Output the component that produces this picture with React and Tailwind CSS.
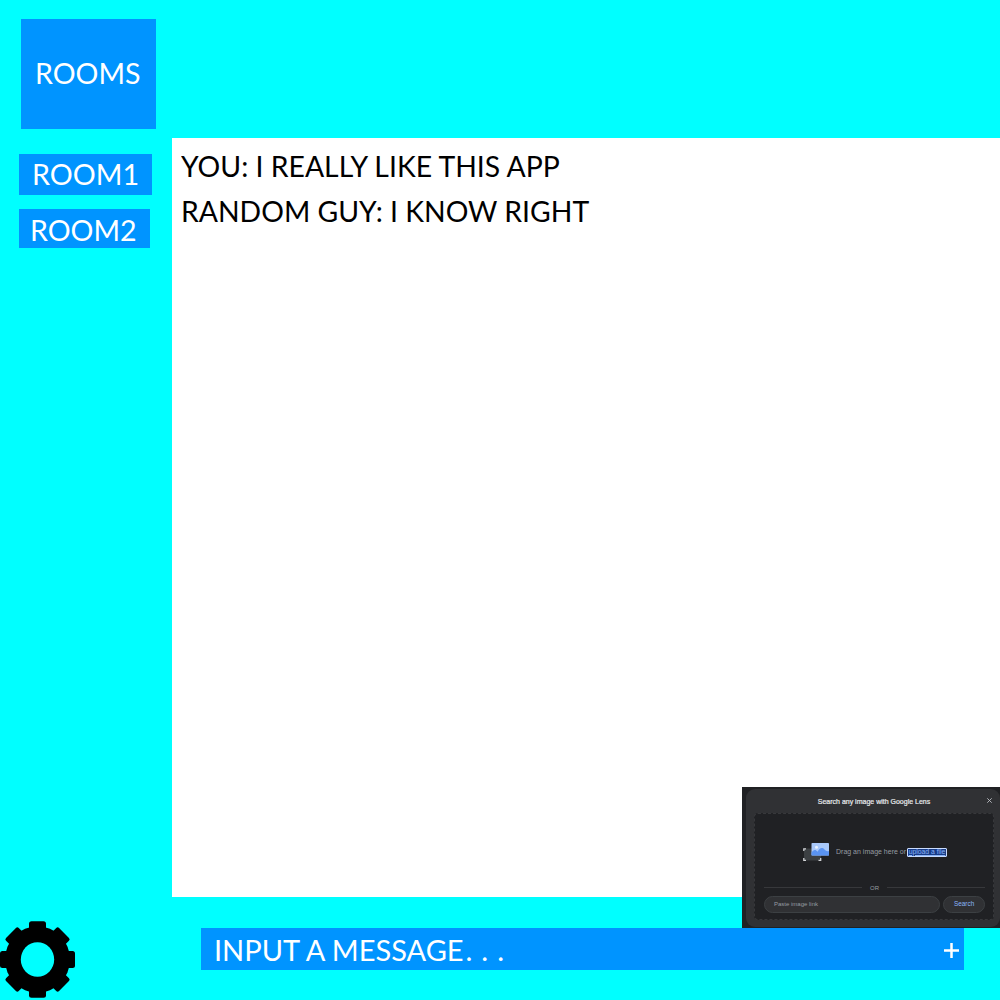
function Gear() {
  return (
    <svg width="75" height="77" viewBox="0 0 75 77" aria-label="Settings" className="block">
      <g transform="translate(37.5 38.5)">
        <rect x="-8.5" y="-38.3" width="17" height="76.6" rx="2.5" />
        <rect x="-37.5" y="-8.5" width="75" height="17" rx="2.5" />
        {[45, 135].map((a) => (
          <rect key={a} x="-9" y="-37.5" width="18" height="75" rx="2" transform={`rotate(${a})`} />
        ))}
        <ellipse rx="32.5" ry="33.2" />
        <ellipse rx="16.7" ry="17.2" fill="#00ffff" />
      </g>
    </svg>
  );
}

function ImageIcon() {
  return (
    <svg width="26" height="19" viewBox="0 0 26 19" className="block shrink-0">
      <rect x="1" y="5.5" width="17" height="12" rx="1" fill="#3c4043" />
      <path d="M.8 8V5.8H3M.8 15v2.3H3M15.5 17.3h2.2V15" fill="none" stroke="#d0d2d5" strokeWidth="1.3" />
      <rect x="8.5" y="0" width="17.5" height="12.6" rx=".8" fill="#a9c9fb" />
      <path d="M8.5 9.5c2-3 4-3.500 6-.8 2-3.500 4.500-5 7-2.200 1.500 1.500 2.500 2 4.500 1.500v4.600H8.500z" fill="#5a94f2" />
      <circle cx="13.500" cy="4.200" r="1.500" fill="#e8f1ff" />
    </svg>
  );
}

function LensPopup() {
  return (
    <div className="absolute left-[742px] top-[787px] h-[141px] w-[258px] overflow-hidden bg-[#202124] pl-1 pt-0.5 font-['Liberation_Sans',sans-serif] text-[#969ba1]">
      <div className="h-[138px] w-[254px] rounded-[9px] bg-[#303134] pl-2 pr-[9px]">
        <div className="relative flex h-6 items-center justify-center text-[7px] text-[#e8eaed]">
          <span className="pl-[3px] pt-[1px] [-webkit-text-stroke:0.2px]">Search any image with Google Lens</span>
          <svg width="5" height="5" viewBox="0 0 5 5" className="absolute -right-[1px] top-[9px]">
            <path d="M.3.3 4.700 4.700M4.700.3.3 4.700" stroke="#bdc1c6" strokeWidth=".9" />
          </svg>
        </div>
        <div className="flex h-[107px] w-[240px] flex-col rounded border border-dashed border-[#37383b] bg-[#202124] pl-[9px] pr-2">
          <div className="flex h-[70px] items-center pl-[39px] pt-[6px]">
            <ImageIcon />
            <span className="ml-[7px] w-[71px] shrink-0 whitespace-nowrap text-[7px] leading-[8px]">Drag an image here or</span>
            <span className="flex h-[9px] w-[40px] shrink-0 items-center justify-center whitespace-nowrap rounded-[1px] border border-[#c9dcff] bg-[#173b86] text-[6.8px] leading-none text-[#8ab4f8] underline">upload a file</span>
          </div>
          <div className="flex h-[7px] items-center text-[6px]">
            <i className="h-px w-[98px] bg-[#37383b]" />
            <span className="w-[26px] text-center">OR</span>
            <i className="h-px w-[98px] bg-[#37383b]" />
          </div>
          <div className="mt-[5px] flex gap-[3px] text-[6px]">
            <div className="flex h-[17px] w-[177px] items-center rounded-full border border-[#3c4043] bg-[#303134] pb-[1px] pl-[9px]">Paste image link</div>
            <div className="flex h-[17px] w-[42px] items-center justify-center rounded-full border border-[#3c4043] bg-[#303134] pb-[1px] text-[6.400px] text-[#8ab4f8]">Search</div>
          </div>
        </div>
      </div>
    </div>
  );
}

export default function App() {
  return (
    <div className="relative flex h-[1000px] w-[1000px] overflow-hidden bg-[#00ffff] font-[Lato,sans-serif] text-[29px] leading-[40px] text-white">
      <aside className="flex w-[172px] shrink-0 flex-col pt-[19px]">
        <div className="ml-[21px] flex h-[110px] w-[135px] items-center bg-[#0094ff] pb-[2px] pl-[14px]">
          <span className="origin-left scale-x-[0.985]">ROOMS</span>
        </div>
        <div className="ml-[19px] mt-[25px] flex h-[41px] w-[133px] items-center bg-[#0094ff] pb-[2px] pl-[13px]">
          <span className="origin-left scale-x-[0.99]">ROOM1</span>
        </div>
        <div className="ml-[19px] mt-[14px] flex h-[39px] w-[131px] items-center bg-[#0094ff] pl-[11px] pt-[2px]">
          <span className="origin-left scale-x-[0.985]">ROOM2</span>
        </div>
        <div className="mb-[2px] mt-auto"><Gear /></div>
      </aside>
      <main className="flex grow flex-col pt-[138px]">
        <section className="h-[759px] bg-white pl-[9px] pt-[5px] leading-[45px] text-black">
          <p className="w-fit origin-left scale-x-[0.978] whitespace-nowrap">YOU: I REALLY LIKE THIS APP</p>
          <p className="w-fit origin-left scale-x-[0.978] whitespace-nowrap">RANDOM GUY: I KNOW RIGHT</p>
        </section>
        <footer className="ml-[29px] mt-[31px] flex h-[42px] w-[763px] items-center justify-between bg-[#0094ff] pl-[13px] pr-[5px]">
          <span className="whitespace-pre pt-[2px]">INPUT A MESSAGE<span className="ml-[2px] [word-spacing:1.500px]">. . .</span></span>
          <svg width="15" height="15" viewBox="0 0 15 15" className="mt-[3px]"><path d="M7.500 0v15M0 7.500h15" stroke="white" strokeWidth="2.500" /></svg>
        </footer>
      </main>
      <LensPopup />
    </div>
  );
}
